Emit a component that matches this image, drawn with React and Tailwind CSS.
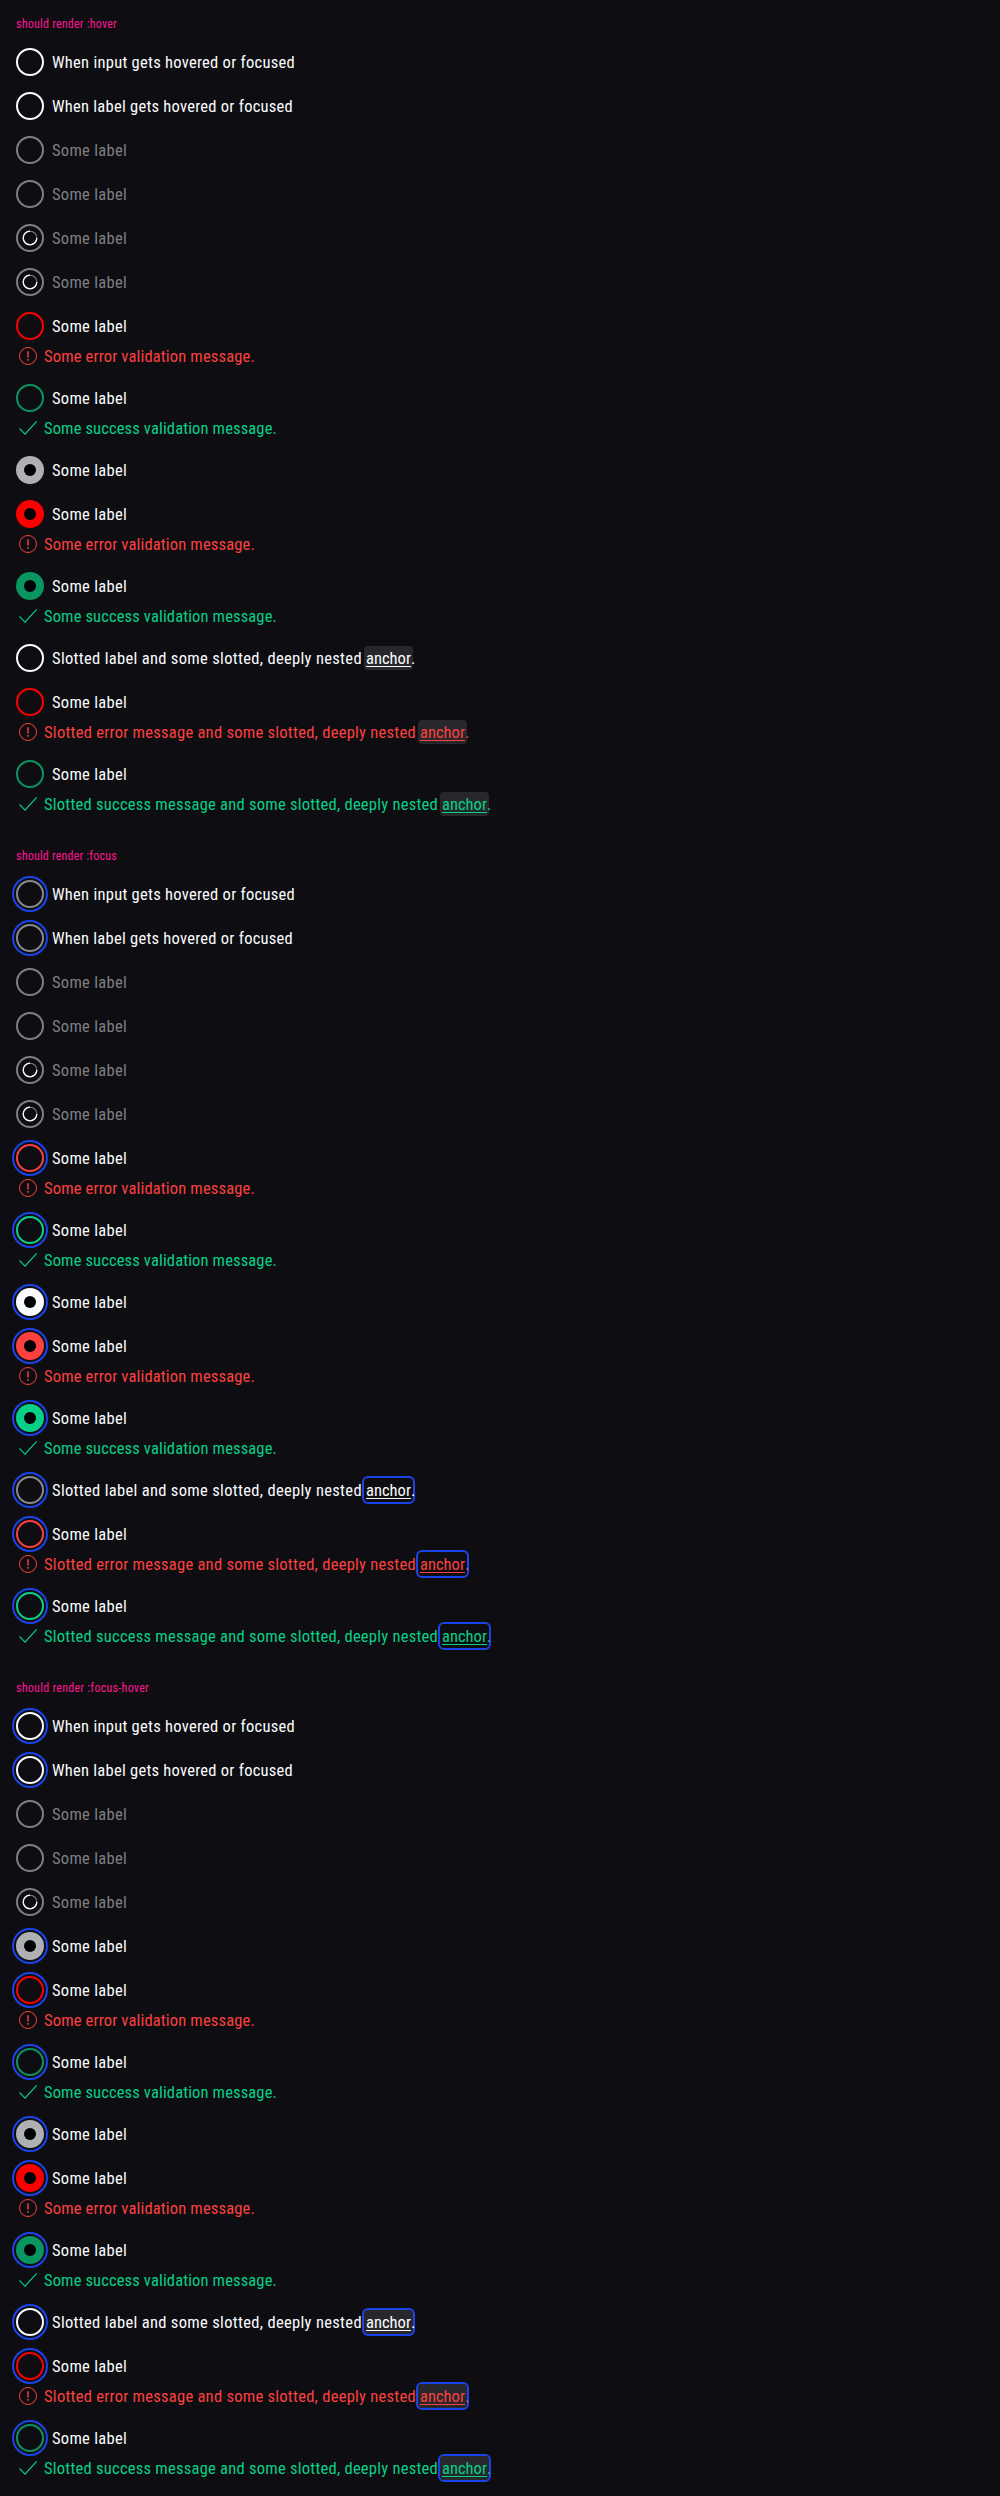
import { useLayoutEffect, useRef } from "react";

const rings = {
  white: "border-[#fbfcff]",
  gray: "border-[#88898c]",
  muted: "border-[#7e7f82]",
  red: "border-[#fc0000]",
  redSoft: "border-[#fc4040]",
  green: "border-[#09955f]",
  greenSoft: "border-[#09d087]",
};

const fills = {
  white: "bg-[#fbfcff]",
  gray: "bg-[#afb0b3]",
  red: "bg-[#fc0000]",
  redSoft: "bg-[#fc4040]",
  green: "bg-[#09955f]",
  greenSoft: "bg-[#09d087]",
};

// Spreads the glyphs so that the text takes exactly `width` pixels.
function Fit({ width, children, underline }) {
  const ref = useRef(null);
  useLayoutEffect(() => {
    const el = ref.current;
    el.style.letterSpacing = "0px";
    const natural = el.getBoundingClientRect().width;
    el.style.letterSpacing = (width - natural) / el.textContent.length + "px";
  }, [width]);
  return (
    <span
      ref={ref}
      className={"inline-block whitespace-pre " + (underline ? "underline decoration-1 underline-offset-2" : "")}
    >
      {children}
    </span>
  );
}

function Anchor({ hover, focus }) {
  return (
    <span className="relative -mx-0.5 inline-block h-6 px-0.5">
      <span
        className={
          "absolute inset-x-0 -top-px h-6 rounded-sm " +
          (hover ? "bg-[#27272c] " : "") +
          (focus ? "outline-2 outline-[#1a44ea]" : "")
        }
      />
      <span className="relative">
        <Fit width={45} underline>
          anchor
        </Fit>
      </span>
    </span>
  );
}

function Spinner() {
  return (
    <svg viewBox="0 0 16 16" className="size-4" fill="none" strokeWidth="1.3">
      <circle cx="8" cy="8" r="6.8" stroke="#7e7f82" strokeWidth="1.1" />
      <path d="M8 1.2A6.8 6.8 0 1 0 14.8 8" stroke="#fbfcff" />
    </svg>
  );
}

function Radio({ kind, color, focus }) {
  const outline = focus ? " outline-2 outline-offset-2 outline-[#1a44ea]" : "";
  if (kind === "checked") {
    return (
      <span className={"flex size-7 shrink-0 items-center justify-center rounded-full " + fills[color] + outline}>
        <span className="size-3 rounded-full bg-[#010205]" />
      </span>
    );
  }
  return (
    <span className={"flex size-7 shrink-0 items-center justify-center rounded-full border-2 " + rings[color] + outline}>
      {kind === "loading" && <Spinner />}
    </span>
  );
}

function ErrorIcon() {
  return (
    <svg viewBox="0 0 24 24" className="size-6 shrink-0" fill="none" stroke="currentColor">
      <circle cx="12" cy="12" r="8.5" strokeWidth="1" />
      <path d="M12 7.2v6.3M12 15v1.7" strokeWidth="1.4" />
    </svg>
  );
}

function CheckIcon() {
  return (
    <svg viewBox="0 0 24 24" className="size-6 shrink-0" fill="none" stroke="currentColor">
      <path d="M3.5 12.3 9 18.1 20.6 5.3" strokeWidth="1.2" />
    </svg>
  );
}

const messages = {
  error: ["Some error validation message.", 211],
  success: ["Some success validation message.", 233],
  slottedError: ["Slotted error message and some slotted, deeply nested ", 376],
  slottedSuccess: ["Slotted success message and some slotted, deeply nested ", 398],
};

function Message({ type, hover, focus }) {
  const [text, width] = messages[type];
  const isError = type === "error" || type === "slottedError";
  const slotted = type.startsWith("slotted");
  return (
    <div className={"flex h-6 " + (isError ? "text-[#fc4040]" : "text-[#09d087]")}>
      {isError ? <ErrorIcon /> : <CheckIcon />}
      <span className="ml-1 mt-px h-6 whitespace-pre">
        <Fit width={width}>{text}</Fit>
        {slotted && (
          <>
            <Anchor hover={hover} focus={focus} />
            <span className="relative">.</span>
          </>
        )}
      </span>
    </div>
  );
}

const labels = {
  some: ["Some label", 75],
  input: ["When input gets hovered or focused", 243],
  label: ["When label gets hovered or focused", 241],
  slotted: ["Slotted label and some slotted, deeply nested ", 314],
};

function Row({ kind = "empty", color, label = "some", dim, focus, hover, message }) {
  const [text, width] = labels[label];
  return (
    <div className="flex flex-col gap-1">
      <div className="flex h-7 gap-2">
        <Radio kind={kind} color={color} focus={focus} />
        <span className={"mt-[3px] h-6 whitespace-pre " + (dim ? "text-[#7e7f82]" : "text-[#fbfcff]")}>
          <Fit width={width}>{text}</Fit>
          {label === "slotted" && (
            <>
              <Anchor hover={hover} focus={focus} />
              <span className="relative">.</span>
            </>
          )}
        </span>
      </div>
      {message && <Message type={message} hover={hover} focus={focus} />}
    </div>
  );
}

function Section({ title, titleWidth, hover, focus }) {
  const base = hover ? "white" : "gray";
  const red = hover ? "red" : "redSoft";
  const green = hover ? "green" : "greenSoft";
  const solid = hover ? "gray" : "white";
  const state = { hover, focus };
  return (
    <section className="flex flex-col gap-4 p-4">
      <h2 className="h-4 text-[12px] leading-4 text-[#ff1493]">
        <Fit width={titleWidth}>{title}</Fit>
      </h2>
      <Row color={base} label="input" {...state} />
      <Row color={base} label="label" {...state} />
      <Row color="muted" dim />
      <Row color="muted" dim />
      <Row kind="loading" color="muted" dim />
      {hover && focus ? <Row kind="checked" color="gray" {...state} /> : <Row kind="loading" color="muted" dim />}
      <Row color={red} message="error" {...state} />
      <Row color={green} message="success" {...state} />
      <Row kind="checked" color={solid} {...state} />
      <Row kind="checked" color={red} message="error" {...state} />
      <Row kind="checked" color={green} message="success" {...state} />
      <Row color={base} label="slotted" {...state} />
      <Row color={red} message="slottedError" {...state} />
      <Row color={green} message="slottedSuccess" {...state} />
    </section>
  );
}

export default function App() {
  return (
    <main className="w-full bg-[#0e0e12] font-['Roboto',sans-serif] text-[16.5px] leading-6 font-normal [font-stretch:75%]">
      <Section title="should render :hover" titleWidth={101} hover />
      <Section title="should render :focus" titleWidth={101} focus />
      <Section title="should render :focus-hover" titleWidth={133} hover focus />
    </main>
  );
}
